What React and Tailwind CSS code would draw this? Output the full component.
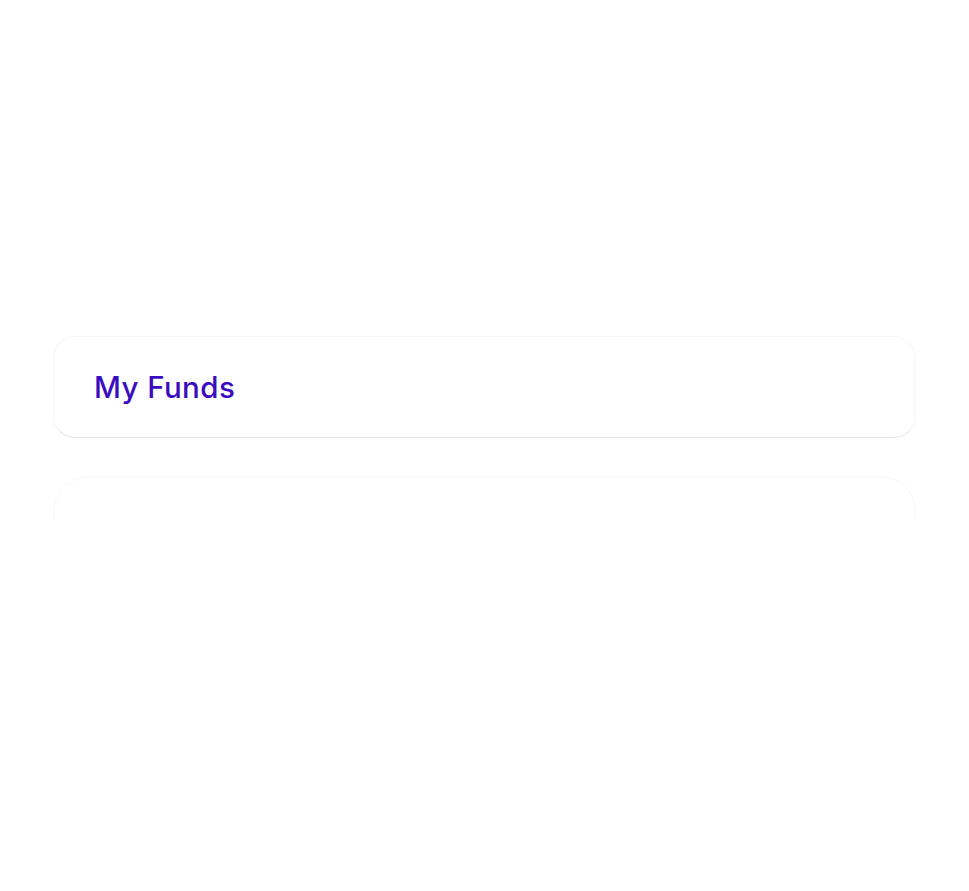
import React from 'react'

export default function App() {
  return (
    <div className="min-h-[891px] bg-white px-[53px] pt-[336px]" style={{ fontFamily: 'Inter, "Noto Sans", sans-serif' }}>
      {/* header card */}
      <section className="flex h-[102px] items-center rounded-[22px] border border-[#f6f6f6] border-b-[#e3e3e3] bg-white px-[40px]">
        <h2 className="pt-[1px] text-[29.5px] font-medium tracking-[0.4px] text-[#3a0cbf]">My Funds</h2>
      </section>

      {/* faded panel behind */}
      <div className="mt-[38px] h-[46px] rounded-t-[36px] border-x border-t border-[#f8f8f8]" />
    </div>
  )
}
